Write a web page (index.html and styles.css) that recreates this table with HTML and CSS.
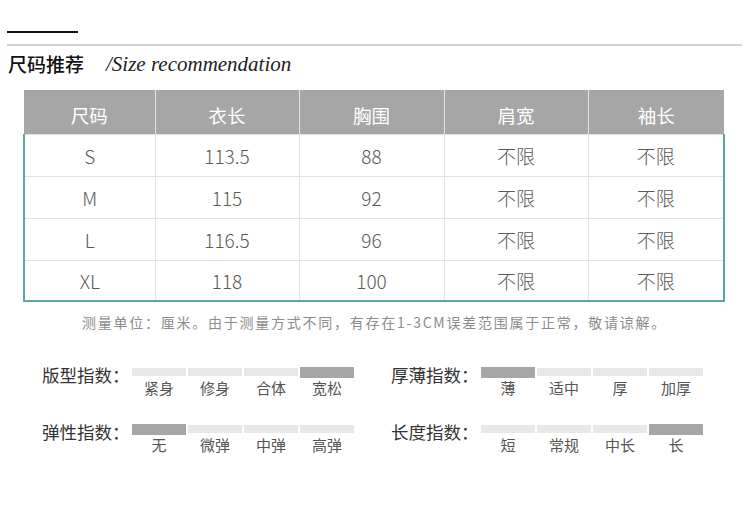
FILE: index.html
```html
<!DOCTYPE html>
<html lang="zh-CN">
<head>
<meta charset="utf-8">
<title>尺码推荐</title>
<link rel="stylesheet" href="styles.css">
</head>
<body>
<div class="page">
  <div class="rule-dark"></div>
  <div class="rule-light"></div>
  <div class="title">
    <span class="title-cn">尺码推荐</span>
    <span class="title-en">/Size recommendation</span>
  </div>
  <table class="size-table">
    <thead>
      <tr><th class="c1">尺码</th><th class="c2">衣长</th><th class="c3">胸围</th><th class="c4">肩宽</th><th class="c5">袖长</th></tr>
    </thead>
    <tbody>
      <tr><td>S</td><td>113.5</td><td>88</td><td>不限</td><td>不限</td></tr>
      <tr><td>M</td><td>115</td><td>92</td><td>不限</td><td>不限</td></tr>
      <tr><td>L</td><td>116.5</td><td>96</td><td>不限</td><td>不限</td></tr>
      <tr><td>XL</td><td>118</td><td>100</td><td>不限</td><td>不限</td></tr>
    </tbody>
  </table>
  <p class="note">测量单位：厘米。由于测量方式不同，有存在1-3CM误差范围属于正常，敬请谅解。</p>
  <div class="factors">
    <div class="factor">
      <div class="factor-label">版型指数：</div>
      <div class="segs">
        <div class="seg"><div class="bar-box"><div class="bar"></div></div><div class="seg-label">紧身</div></div>
        <div class="seg"><div class="bar-box"><div class="bar"></div></div><div class="seg-label">修身</div></div>
        <div class="seg"><div class="bar-box"><div class="bar"></div></div><div class="seg-label">合体</div></div>
        <div class="seg"><div class="bar-box"><div class="bar on"></div></div><div class="seg-label">宽松</div></div>
      </div>
    </div>
    <div class="factor">
      <div class="factor-label">厚薄指数：</div>
      <div class="segs">
        <div class="seg"><div class="bar-box"><div class="bar on"></div></div><div class="seg-label">薄</div></div>
        <div class="seg"><div class="bar-box"><div class="bar"></div></div><div class="seg-label">适中</div></div>
        <div class="seg"><div class="bar-box"><div class="bar"></div></div><div class="seg-label">厚</div></div>
        <div class="seg"><div class="bar-box"><div class="bar"></div></div><div class="seg-label">加厚</div></div>
      </div>
    </div>
    <div class="factor">
      <div class="factor-label">弹性指数：</div>
      <div class="segs">
        <div class="seg"><div class="bar-box"><div class="bar on"></div></div><div class="seg-label">无</div></div>
        <div class="seg"><div class="bar-box"><div class="bar"></div></div><div class="seg-label">微弹</div></div>
        <div class="seg"><div class="bar-box"><div class="bar"></div></div><div class="seg-label">中弹</div></div>
        <div class="seg"><div class="bar-box"><div class="bar"></div></div><div class="seg-label">高弹</div></div>
      </div>
    </div>
    <div class="factor">
      <div class="factor-label">长度指数：</div>
      <div class="segs">
        <div class="seg"><div class="bar-box"><div class="bar"></div></div><div class="seg-label">短</div></div>
        <div class="seg"><div class="bar-box"><div class="bar"></div></div><div class="seg-label">常规</div></div>
        <div class="seg"><div class="bar-box"><div class="bar"></div></div><div class="seg-label">中长</div></div>
        <div class="seg"><div class="bar-box"><div class="bar on"></div></div><div class="seg-label">长</div></div>
      </div>
    </div>
  </div>
</div>
</body>
</html>
```
FILE: styles.css
```css
* { box-sizing: border-box; }
html, body { margin: 0; padding: 0; background: #fff; }
body {
  font-family: "Noto Sans CJK SC", "Noto Sans", sans-serif;
  color: #555;
}
.page {
  width: 750px;
  height: 506px;
  padding-top: 31px;
}
.rule-dark {
  width: 71px;
  height: 2px;
  margin-left: 7px;
  background: #111;
}
.rule-light {
  width: 735px;
  height: 2px;
  margin: 11px 0 0 7px;
  background: #d2d2d2;
}
.title {
  display: flex;
  align-items: center;
  height: 26px;
  margin: 5px 0 0 8px;
}
.title-cn {
  font-size: 19px;
  font-weight: 500;
  color: #111;
  line-height: 26px;
}
.title-en {
  margin-left: 22px;
  font-family: "Liberation Serif", serif;
  font-style: italic;
  font-size: 21px;
  color: #222;
  line-height: 26px;
}
.size-table {
  margin: 13px 0 0 23px;
  width: 700px;
  border-collapse: collapse;
  table-layout: fixed;
  font-size: 19px;
  font-weight: 300;
}
.size-table .c1 { width: 131px; }
.size-table .c2 { width: 144px; }
.size-table .c3 { width: 145px; }
.size-table .c4 { width: 144px; }
.size-table .c5 { width: 136px; }
.size-table th {
  height: 44px;
  padding: 6px 0 0;
  background: #a6a6a6;
  color: #fff;
  font-weight: 400;
  font-size: 18.5px;
  text-align: center;
  border: none;
  border-left: 1px solid #e4e4e4;
}
.size-table th:first-child { border-left: none; }
.size-table td {
  height: 42px;
  padding: 0;
  text-align: center;
  color: #5a5a5a;
  border: 1px solid #e2e2e2;
}
.size-table td:first-child { border-left: 2px solid #5aa6a3; }
.size-table td:last-child { border-right: 2px solid #5aa6a3; }
.size-table tbody tr:last-child td { border-bottom: 2px solid #5aa6a3; height: 41px; }
.note {
  margin: 10px 0 0 82px;
  font-size: 14px;
  letter-spacing: 1.75px;
  line-height: 20px;
  color: #8c8c8c;
}
.factors {
  margin: 33px 0 0 42px;
  display: grid;
  grid-template-columns: 349px 349px;
  row-gap: 24px;
}
.factor {
  display: flex;
  align-items: flex-start;
}
.factor-label {
  width: 90px;
  font-size: 17.5px;
  line-height: 20px;
  color: #333;
}
.segs {
  display: flex;
  gap: 2px;
  padding-top: 1px;
}
.seg {
  width: 54px;
  display: flex;
  flex-direction: column;
  align-items: center;
}
.bar-box {
  width: 100%;
  height: 12px;
  display: flex;
  align-items: center;
}
.bar {
  width: 100%;
  height: 8px;
  background: #e8e8e8;
}
.bar.on {
  height: 11px;
  background: #a6a6a6;
}
.seg-label {
  margin-top: 0;
  font-size: 15px;
  line-height: 20px;
  color: #555;
}
```
